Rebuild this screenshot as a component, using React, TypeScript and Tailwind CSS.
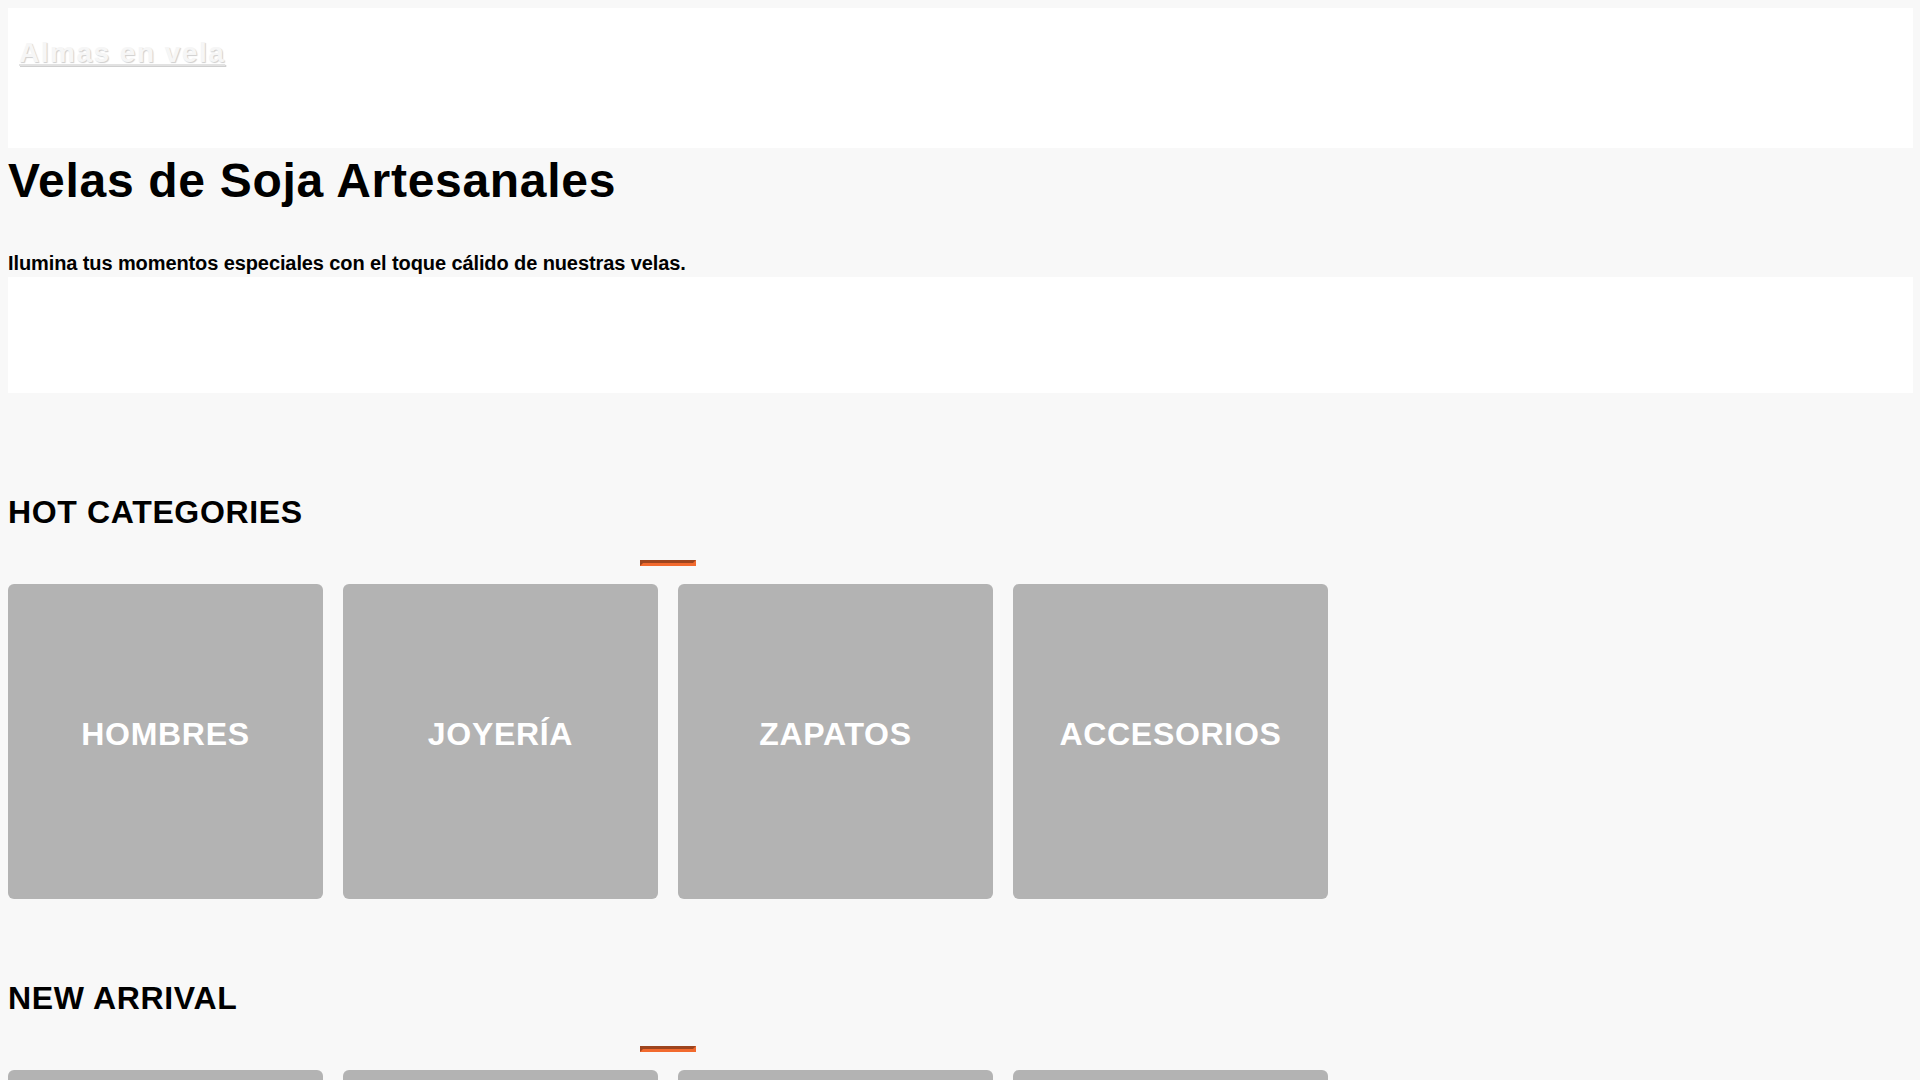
import React from "react";

const categories = ["HOMBRES", "JOYERÍA", "ZAPATOS", "ACCESORIOS"];

const products = [
  { name: "Vela Lavanda", price: "$12.990" },
  { name: "Vela Vainilla", price: "$12.990" },
  { name: "Vela Canela", price: "$13.490" },
  { name: "Vela Coco", price: "$11.990" },
  { name: "Vela Eucalipto", price: "$12.490" },
  { name: "Vela Rosa Mosqueta", price: "$14.990" },
  { name: "Vela Sándalo", price: "$13.990" },
  { name: "Vela Cítricos", price: "$11.490" },
];

function SectionTitle({ title, top }: { title: string; top: string }) {
  return (
    <>
      <h2 className={`${top} text-[32px] leading-[37px] font-bold tracking-[0.65px] text-black`}>
        {title}
      </h2>
      {/* barra decorativa */}
      <div className="mt-[29px] mx-auto h-[6px] w-[56px] border-[3px] [border-style:inset] border-[#f26a2e]" />
    </>
  );
}

function ProductGrid({ items }: { items: typeof products }) {
  return (
    <div className="mt-[18px] grid grid-cols-4 gap-5">
      {items.map((p) => (
        <article key={p.name} className="flex flex-col">
          <div className="h-[315px] rounded-md bg-[#b3b3b3]" />
          <h3 className="mt-3 text-[18px] font-bold">{p.name}</h3>
          <span className="text-[16px] font-bold text-[#f26a2e]">{p.price}</span>
        </article>
      ))}
    </div>
  );
}

export default function App() {
  return (
    <div className="h-screen w-screen overflow-scroll bg-[#f8f8f8] font-['Liberation_Sans',Arial,sans-serif] text-black [&::-webkit-scrollbar]:block [&::-webkit-scrollbar]:h-[15px] [&::-webkit-scrollbar]:w-[15px] [&::-webkit-scrollbar-track]:bg-[#f1f1f1] [&::-webkit-scrollbar-thumb]:border-[3px] [&::-webkit-scrollbar-thumb]:border-solid [&::-webkit-scrollbar-thumb]:border-[#f1f1f1] [&::-webkit-scrollbar-thumb]:bg-[#c1c1c1] [&::-webkit-scrollbar-corner]:bg-[#dcdcdc]">
      <div className="min-h-[6192px] pt-2 pl-2">
        <div className="w-[1905px]">
          {/* HEADER */}
          <header className="h-[140px] bg-white pt-[29px] pl-[11px]">
            <a
              href="#"
              className="text-[28px] leading-[32px] font-bold tracking-[1.5px] text-[#f6f6f6] underline decoration-[#e2e2e2] [text-shadow:1px_1px_1px_#cfcfcf]"
            >
              Almas en vela
            </a>
          </header>

          {/* HERO */}
          <h1 className="mt-[5px] text-[48px] leading-[56px] font-bold tracking-[0.7px]">
            Velas de Soja Artesanales
          </h1>
          <p className="mt-[42px] text-[20px] leading-[24px] font-bold tracking-[-0.1px]">
            Ilumina tus momentos especiales con el toque cálido de nuestras velas.
          </p>
          <div className="mt-[2px] h-[116px] bg-white" />

          {/* HOT CATEGORIES */}
          <section className="w-[1320px]">
            <SectionTitle title="HOT CATEGORIES" top="mt-[101px]" />
            <div className="mt-[18px] grid grid-cols-4 gap-5">
              {categories.map((c) => (
                <a
                  key={c}
                  href="#"
                  className="flex h-[315px] items-center justify-center rounded-md bg-[#b3b3b3] pb-[14px]"
                >
                  <span className="text-[32px] leading-[37px] font-bold tracking-[0.7px] text-white">
                    {c}
                  </span>
                </a>
              ))}
            </div>
          </section>

          {/* NEW ARRIVAL */}
          <section className="w-[1320px]">
            <SectionTitle title="NEW ARRIVAL" top="mt-[81px]" />
            <ProductGrid items={products} />
          </section>

          {/* BEST SELLERS */}
          <section className="w-[1320px]">
            <SectionTitle title="BEST SELLERS" top="mt-[81px]" />
            <ProductGrid items={products.slice(0, 4)} />
          </section>

          <footer className="mt-[81px] bg-white px-[11px] py-10 text-[14px] text-[#555]">
            © 2024 Almas en vela — Velas de soja hechas a mano.
          </footer>
        </div>
      </div>
    </div>
  );
}
